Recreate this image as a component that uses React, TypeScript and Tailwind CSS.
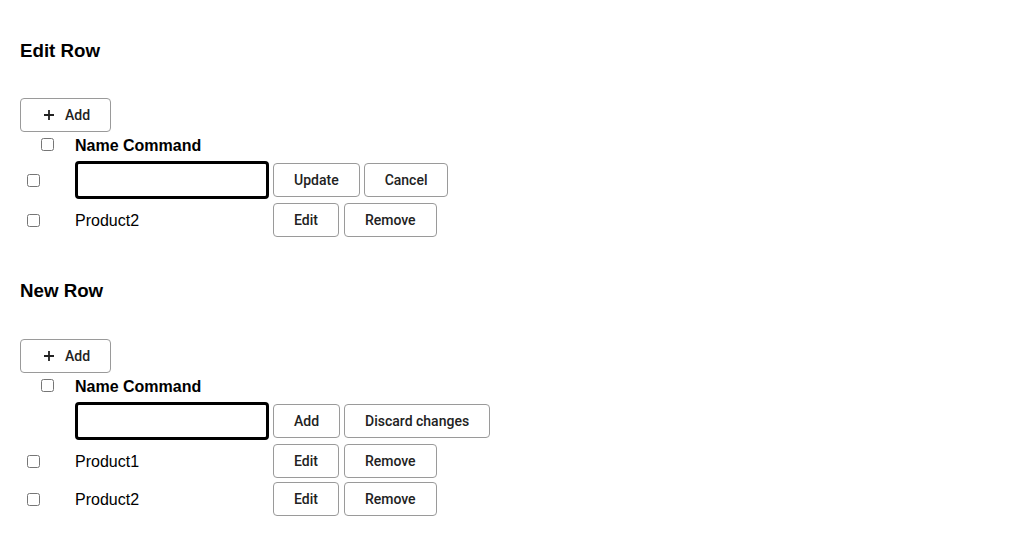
import React from 'react'

const sans = { fontFamily: '"Liberation Sans", Arial, sans-serif' }

function PlusIcon() {
  return (
    <svg width="10" height="10" viewBox="0 0 10 10" className="shrink-0">
      <path d="M5 0v10M0 5h10" stroke="#222" strokeWidth="1.8" fill="none" />
    </svg>
  )
}

function Btn({ children }: { children: React.ReactNode }) {
  return (
    <button className="h-[34px] px-[20px] border border-[#9a9a9a] rounded-[4px] bg-white text-[14px] font-medium text-[#222] font-['Roboto',sans-serif] whitespace-nowrap">
      {children}
    </button>
  )
}

function Check({ className = '' }: { className?: string }) {
  return <input type="checkbox" className={'m-0 w-[13px] h-[13px] ' + className} />
}

function AddButton() {
  return (
    <button className="w-[91px] h-[34px] pl-[23px] flex items-center gap-[11px] border border-[#9a9a9a] rounded-[4px] bg-white text-[14px] font-medium text-[#222] font-['Roboto',sans-serif]">
      <PlusIcon />
      <span>Add</span>
    </button>
  )
}

function HeaderRow() {
  return (
    <div className="flex items-center h-[28px]">
      <div className="w-[55px] flex">
        <Check className="ml-[21px] mb-[3px]" />
      </div>
      <span className="text-[16px] font-bold text-black">Name Command</span>
    </div>
  )
}

function InputRow({ check, actions }: { check: boolean; actions: string[] }) {
  return (
    <div className="flex items-center pt-px pb-[2px]">
      <div className="w-[55px] flex">{check && <Check className="ml-[7px]" />}</div>
      <input
        type="text"
        className="w-[194px] h-[38px] border-[3px] border-black rounded-[4px] outline-none px-2 text-[16px]"
      />
      <div className="flex gap-[4px] ml-[4px]">
        {actions.map((a) => (
          <Btn key={a}>{a}</Btn>
        ))}
      </div>
    </div>
  )
}

function ProductRow({ name }: { name: string }) {
  return (
    <div className="flex items-center h-[38px]">
      <div className="w-[55px] flex">
        <Check className="ml-[7px]" />
      </div>
      <span className="w-[198px] pt-[2px] text-[16px] text-black">{name}</span>
      <div className="flex gap-[5px]">
        <Btn>Edit</Btn>
        <Btn>Remove</Btn>
      </div>
    </div>
  )
}

export default function App() {
  return (
    <div className="w-[1024px] h-[538px] bg-white pl-5 pt-[40px] overflow-hidden" style={sans}>
      <section>
        <h3 className="text-[18.72px] leading-[22px] font-bold text-black">Edit Row</h3>
        <div className="mt-[36px]">
          <AddButton />
        </div>
        <HeaderRow />
        <InputRow check actions={['Update', 'Cancel']} />
        <ProductRow name="Product2" />
      </section>

      <section className="mt-[41px]">
        <h3 className="text-[18.72px] leading-[22px] font-bold text-black">New Row</h3>
        <div className="mt-[37px]">
          <AddButton />
        </div>
        <HeaderRow />
        <InputRow check={false} actions={['Add', 'Discard changes']} />
        <ProductRow name="Product1" />
        <ProductRow name="Product2" />
      </section>
    </div>
  )
}
